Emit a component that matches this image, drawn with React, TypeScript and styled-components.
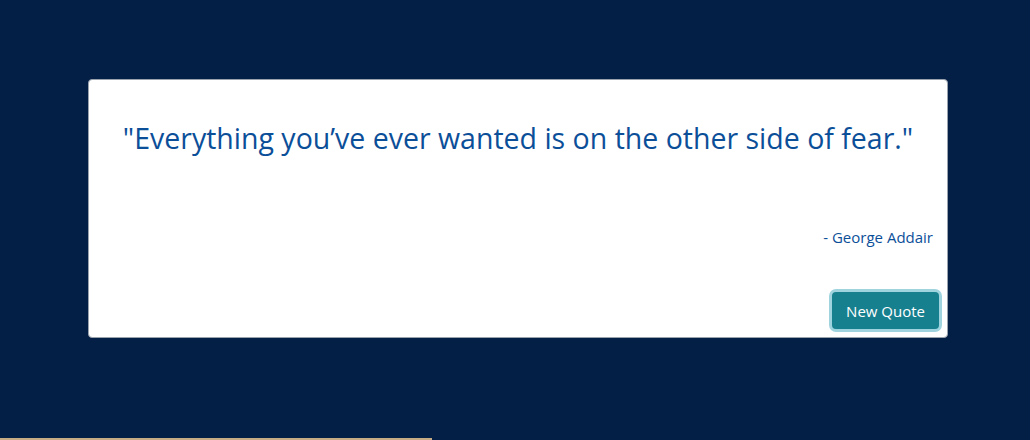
import React from "react";
import styled, { createGlobalStyle } from "styled-components";

const Global = createGlobalStyle`
  html, body { margin: 0; padding: 0; background: #041f46; }
  body { font-family: "Open Sans", "Noto Sans", sans-serif; }
`;

const Page = styled.div`
  height: 440px;
  display: flex;
  flex-direction: column;
  background: #041f46;
`;

const Main = styled.main`
  flex: 1;
  display: flex;
  justify-content: center;
  padding: 79px 0 0 6px;
`;

const Card = styled.section`
  box-sizing: border-box;
  width: 860px;
  height: 259px;
  background: #ffffff;
  border: 1px solid #9aa3ad;
  border-radius: 4px;
  display: flex;
  flex-direction: column;
  padding: 38px 5px 5px 5px;
`;

const Quote = styled.h1`
  margin: 0;
  font-weight: 400;
  font-size: 28.5px;
  line-height: 40px;
  color: #0c4f99;
  text-align: center;
`;

const Author = styled.p`
  margin: 69px 9px 0 0;
  text-align: right;
  font-size: 15px;
  line-height: 20px;
  color: #0c4f99;
`;

const Actions = styled.div`
  margin-top: auto;
  display: flex;
  justify-content: flex-end;
`;

const Button = styled.button`
  box-sizing: border-box;
  height: 37px;
  padding: 0 14px;
  border: none;
  border-radius: 4px;
  background: #17808f;
  color: #ffffff;
  font-family: "Open Sans", "Noto Sans", sans-serif;
  font-size: 15px;
  box-shadow: 0 0 0 3px #9fd4df;
  margin: 3px;
  cursor: pointer;
`;

const BottomBar = styled.div`
  height: 2px;
  width: 432px;
  background: #c6ab84;
`;

export default function App() {
  return (
    <Page>
      <Global />
      <Main>
        <Card>
          <Quote>"Everything you’ve ever wanted is on the other side of fear."</Quote>
          <Author>- George Addair</Author>
          <Actions>
            <Button>New Quote</Button>
          </Actions>
        </Card>
      </Main>
      <BottomBar />
    </Page>
  );
}
